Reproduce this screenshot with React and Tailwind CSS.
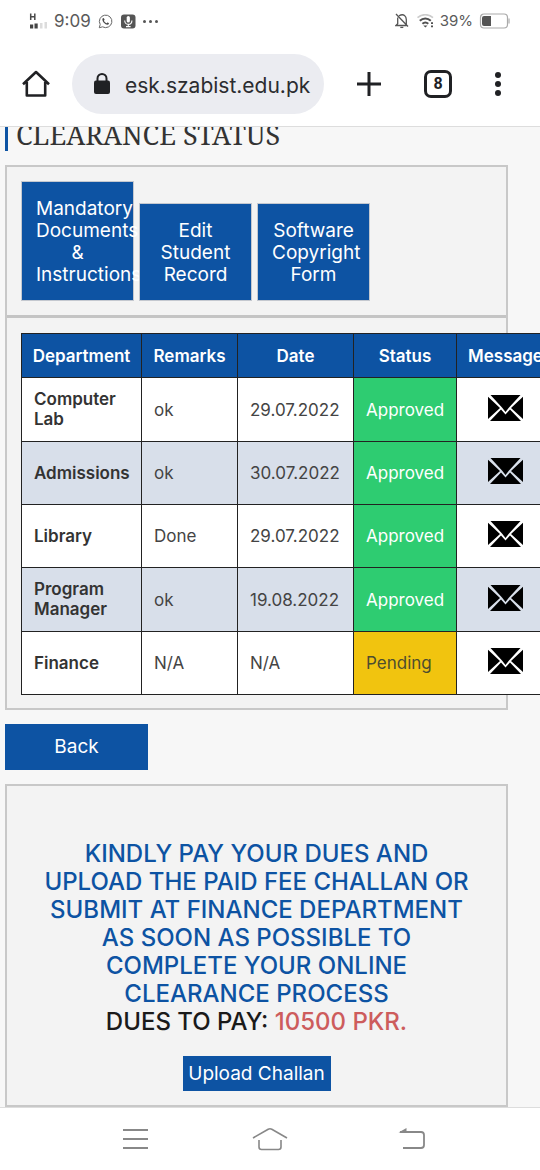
import React from "react";

const rows = [
  { department: "Computer Lab", remarks: "ok", date: "29.07.2022", status: "Approved" },
  { department: "Admissions", remarks: "ok", date: "30.07.2022", status: "Approved" },
  { department: "Library", remarks: "Done", date: "29.07.2022", status: "Approved" },
  { department: "Program Manager", remarks: "ok", date: "19.08.2022", status: "Approved" },
  { department: "Finance", remarks: "N/A", date: "N/A", status: "Pending" },
];

const statusStyles = {
  Approved: "bg-[#2ecc71] text-white",
  Pending: "bg-[#f1c40f] text-[#4d4d30]",
};

function StatusBar() {
  return (
    <div className="flex h-[42px] shrink-0 items-center justify-between bg-white pr-[30px] pl-[29px] text-[#5a5a5a]">
      <div className="flex items-center">
        <svg width="20" height="18" viewBox="0 0 20 18" aria-hidden="true">
          <path d="M1.700 1.500v6.500M5.800 1.500v6.500M1.700 4.700H5.800" fill="none" stroke="#4a4a4a" strokeWidth="1.500" />
          <path d="M1 12.500h3.200v4H1zM5.500 11.500h3.200v5H5.500z" fill="#444" />
          <path d="M11 11h2.500v5.500H11zM15.500 10H18v6.500h-2.500z" fill="#dcdcdc" />
        </svg>
        <span className="ml-[5px] text-[17px] leading-5">9:09</span>
        <svg className="ml-[7px]" width="15" height="15" viewBox="0 0 24 24" aria-hidden="true">
          <path d="M2 22l1.500-5.300A10 10 0 1 1 7.300 20.500z" fill="none" stroke="#666" strokeWidth="1.600" strokeLinejoin="round" />
          <path d="M8.500 6.500c-.6 0-1.700 1-1.500 2.600.4 3.400 4.200 7.500 8 8 1.600.2 2.700-1.300 2.600-2.200-.3-.6-2-1.500-2.500-1.500-.6 0-1 1.400-1.600 1.300-1.500-.4-3.500-2.400-4-3.900-.1-.5 1-.9 1-1.500 0-.6-1-2.700-2-2.800z" fill="#4a4a4a" />
        </svg>
        <svg className="ml-2" width="15" height="15" viewBox="0 0 15 15" aria-hidden="true">
          <rect x="0" y="0.500" width="14.500" height="14" rx="3" fill="#555" />
          <rect x="5.700" y="2" width="3.200" height="6.500" rx="1.600" fill="#fff" />
          <path d="M3.700 6.500c0 5.200 7.200 5.200 7.200 0M7.300 10.400v2.200M5 12.600h4.600" fill="none" stroke="#fff" strokeWidth="1.100" />
        </svg>
        <svg className="ml-[7px]" width="17" height="5" viewBox="0 0 17 5" aria-hidden="true" fill="#555">
          <circle cx="1.500" cy="2.500" r="1.500" />
          <circle cx="7.500" cy="2.500" r="1.500" />
          <circle cx="13.500" cy="2.500" r="1.500" />
        </svg>
      </div>
      <div className="flex items-center">
        <svg width="14" height="16" viewBox="0 0 14 16" aria-hidden="true" fill="none" stroke="#555" strokeWidth="1.300">
          <path d="M4 2.800C9 0 11.300 3.500 11.300 6.500v4.800M2.700 4.500v6.300L1 12.500h10.500M1 1l12 12.500" />
          <path d="M5.300 14.400h3" />
        </svg>
        <svg className="ml-2" width="18" height="14" viewBox="0 0 18 14" aria-hidden="true" fill="none" stroke="#505050" strokeWidth="2">
          <path d="M0.500 3.600C5-0.300 11.500-0.300 16 3.600" stroke="#ccc" strokeWidth="1.600" />
          <path d="M2.800 6.800c3.200-3 7.800-3 11 0M5.400 9.800c1.700-1.500 4.200-1.500 5.900 0" />
          <path d="M6.300 11.400h4.200l-2.100 2.200zM14 8.300h2v1.800h-2zM14 11.500h2v1.800h-2z" fill="#505050" stroke="none" />
        </svg>
        <span className="ml-[5px] text-[15px] leading-5">39%</span>
        <svg className="ml-[6px]" width="31" height="16" viewBox="0 0 31 16" aria-hidden="true">
          <rect x="1.500" y="1" width="27" height="14" rx="3.500" fill="none" stroke="#aaa" strokeWidth="1.200" />
          <path d="M5 3h7v10H5a2 2 0 0 1-2-2V5a2 2 0 0 1 2-2z" fill="#555" />
          <path d="M30 5.500v5" stroke="#bbb" strokeWidth="1.500" />
        </svg>
      </div>
    </div>
  );
}

function BrowserBar() {
  return (
    <header className="flex h-[84px] shrink-0 items-center bg-white pr-[30px] pl-5">
      <button type="button" aria-label="Home" className="shrink-0">
        <svg width="32" height="32" viewBox="0 0 32 32" fill="none" stroke="#202124" strokeWidth="2.600">
          <path d="M3 16.200L16 4l13 12.200M6.800 14v13.500h18.400V14" strokeLinejoin="round" />
        </svg>
      </button>
      <div className="ml-5 flex h-[60px] min-w-0 flex-1 items-center rounded-full bg-[#ebecf1] pr-2 pl-[21px]">
        <svg className="shrink-0" width="18" height="24" viewBox="0 0 18 24" aria-hidden="true">
          <path d="M4.500 10V6.500a4.500 4.500 0 0 1 9 0V10" fill="none" stroke="#202124" strokeWidth="2" />
          <rect x="1" y="8.500" width="16" height="13.500" rx="2" fill="#202124" />
        </svg>
        <input
          type="text"
          aria-label="Address"
          defaultValue="esk.szabist.edu.pk"
          className="ml-[14px] w-full min-w-0 bg-transparent pt-1 text-[21px] leading-7 text-[#2b2c30] outline-none"
        />
      </div>
      <button type="button" aria-label="New tab" className="ml-8 shrink-0">
        <svg width="26" height="26" viewBox="0 0 26 26" stroke="#202124" strokeWidth="3">
          <path d="M13 1v24M1 13h24" />
        </svg>
      </button>
      <button
        type="button"
        aria-label="Switch tabs"
        className="ml-[42px] flex size-[28px] shrink-0 items-center justify-center rounded-[7px] border-[3px] border-[#202124] font-['Roboto',sans-serif] text-base leading-4 font-bold text-[#202124]"
      >
        8
      </button>
      <button type="button" aria-label="Menu" className="ml-[34px] shrink-0">
        <svg width="24" height="26" viewBox="0 0 24 26" fill="#202124">
          <circle cx="12" cy="4" r="3" />
          <circle cx="12" cy="13" r="3" />
          <circle cx="12" cy="22" r="3" />
        </svg>
      </button>
    </header>
  );
}

function Envelope() {
  return (
    <svg width="35" height="26" viewBox="0 0 35 26" fill="#000" aria-hidden="true">
      <path d="M2.500 0h30L21 12.500l-3.500 4.500-3.500-4.500z" />
      <path d="M0 1.800l12 11.200L0 24zM35 1.800l-12 11.200L35 24z" />
      <path d="M2 26l11-11.500 4.500 5 4.500-5L33 26z" />
    </svg>
  );
}

function LinkTile({ children }) {
  return (
    <a
      href="#"
      className="w-[113px] border border-[#c4c8cf] bg-[#0d53a3] px-[14px] pt-4 pb-[14px] text-center text-[19px] leading-[22px] text-white"
    >
      {children}
    </a>
  );
}

function ClearanceTable() {
  return (
    <table className="w-[534px] table-fixed border-collapse bg-white text-[17px] leading-5 text-[#444]">
      <colgroup>
        <col className="w-[120px]" />
        <col className="w-[96px]" />
        <col className="w-[116px]" />
        <col className="w-[103px]" />
        <col />
      </colgroup>
      <thead>
        <tr className="h-[44px] bg-[#0d53a3] text-white">
          {["Department", "Remarks", "Date", "Status", "Message"].map((title) => (
            <th key={title} scope="col" className="border border-[#222] text-center font-semibold">
              {title}
            </th>
          ))}
        </tr>
      </thead>
      <tbody>
        {rows.map((row) => (
          <tr key={row.department} className="h-[63px] even:bg-[#d8dfea]">
            <th scope="row" className="border border-[#222] px-3 pt-[11px] pb-3 text-left font-semibold text-[#333]">
              {row.department}
            </th>
            <td className="border border-[#222] px-3">{row.remarks}</td>
            <td className="border border-[#222] pl-3">{row.date}</td>
            <td className={`border border-[#222] pl-3 ${statusStyles[row.status]}`}>{row.status}</td>
            <td className="border border-[#222]">
              <button type="button" aria-label={`Message ${row.department}`} className="mx-auto mb-1 block">
                <Envelope />
              </button>
            </td>
          </tr>
        ))}
      </tbody>
    </table>
  );
}

function NavigationBar() {
  return (
    <nav className="grid h-[63px] shrink-0 grid-cols-3 items-center justify-items-center border-t border-[#ddd] bg-white px-[67px]">
      <button type="button" aria-label="Recent apps">
        <svg width="36" height="24" viewBox="0 0 36 24" fill="none" stroke="#888" strokeWidth="1.800">
          <path d="M6 3h25M6 12h25M6 21h25" />
        </svg>
      </button>
      <button type="button" aria-label="Home screen">
        <svg width="36" height="24" viewBox="0 0 36 24" fill="none" stroke="#888" strokeWidth="1.600" strokeLinejoin="round">
          <path d="M1 11L16.200 2.200q1.800-1 3.600 0L35 11M7 13v7q0 2.500 2.500 2.500h17q2.500 0 2.500-2.500v-7" />
        </svg>
      </button>
      <button type="button" aria-label="Back">
        <svg width="50" height="24" viewBox="-14 0 50 24" fill="none" stroke="#888" strokeWidth="1.800">
          <path d="M6 5h21q3 0 3 3v10q0 3-3 3H9" />
          <path d="M4.500 5.500L12.500 1v4.500z" fill="#888" stroke="none" />
        </svg>
      </button>
    </nav>
  );
}

export default function App() {
  return (
    <div className="flex min-h-screen flex-col overflow-x-hidden bg-[#f7f7f7] font-['Inter',sans-serif]">
      <StatusBar />
      <BrowserBar />
      <main className="flex-1 border-t border-[#ddd] pr-8 pl-[5px]">
        <div className="flex h-6 items-end overflow-hidden border-l-[3px] border-[#0d53a3] pl-2">
          <h1 className="font-['Noto_Serif','Liberation_Serif',serif] text-[27px] leading-8 text-[#333]">
            CLEARANCE STATUS
          </h1>
        </div>

        <section className="mt-[14px] border-2 border-[#c8c8c8] bg-[#f3f3f3]">
          <div className="flex items-end gap-[5px] border-b-[3px] border-[#c4c4c4] p-[14px]">
            <LinkTile>Mandatory Documents &amp; Instructions</LinkTile>
            <LinkTile>Edit Student Record</LinkTile>
            <LinkTile>Software Copyright Form</LinkTile>
          </div>
          <div className="px-[14px] pt-[15px] pb-[13px]">
            <ClearanceTable />
          </div>
        </section>

        <button type="button" className="mt-[14px] block h-[46px] w-[143px] bg-[#0d53a3] text-[19px] leading-6 text-white">
          Back
        </button>

        <section className="mt-[14px] flex flex-col items-center border-2 border-[#c8c8c8] bg-[#f3f3f3] px-[14px] pt-[54px] pb-[14px]">
          <h2 className="text-center text-2xl leading-7 font-medium text-[#0d53a3]">
            KINDLY PAY YOUR DUES AND
            <br />
            UPLOAD THE PAID FEE CHALLAN OR
            <br />
            SUBMIT AT FINANCE DEPARTMENT
            <br />
            AS SOON AS POSSIBLE TO
            <br />
            COMPLETE YOUR ONLINE
            <br />
            CLEARANCE PROCESS
            <br />
            <span className="text-[#1a1a1a]">DUES TO PAY: </span>
            <span className="text-[#cd5c5c]">10500 PKR.</span>
          </h2>
          <button type="button" className="mt-5 h-[35px] w-[148px] bg-[#0d53a3] text-[19px] leading-6 text-white">
            Upload Challan
          </button>
        </section>
      </main>
      <NavigationBar />
    </div>
  );
}
